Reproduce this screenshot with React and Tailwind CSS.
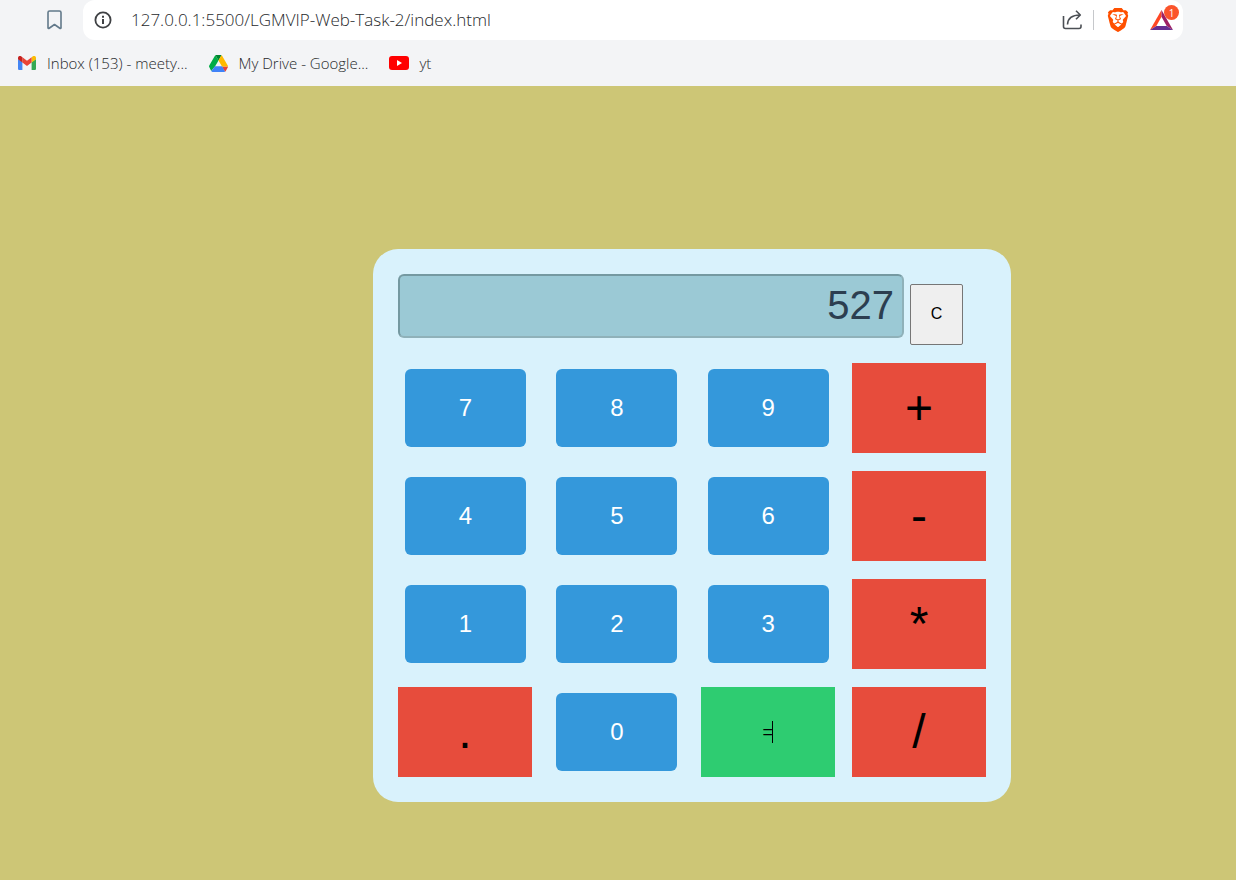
import { useState } from "react";
import { SiBrave } from "react-icons/si";

const keys = [
  { label: "7", kind: "digit" },
  { label: "8", kind: "digit" },
  { label: "9", kind: "digit" },
  { label: "+", kind: "operator" },
  { label: "4", kind: "digit" },
  { label: "5", kind: "digit" },
  { label: "6", kind: "digit" },
  { label: "-", kind: "operator" },
  { label: "1", kind: "digit" },
  { label: "2", kind: "digit" },
  { label: "3", kind: "digit" },
  { label: "*", kind: "operator" },
  { label: ".", kind: "operator" },
  { label: "0", kind: "digit" },
  { label: "=", kind: "equals" },
  { label: "/", kind: "operator" },
];

const keyStyles = {
  digit: "my-[6px] mr-[6px] ml-[7px] rounded-md bg-[#3498db] text-2xl text-white",
  operator: "bg-[#e74c3c] text-5xl text-black",
  equals: "relative bg-[#2ecc71] text-lg text-black",
};

function GmailIcon() {
  return (
    <svg width="18" height="14" viewBox="0 0 18 14" aria-hidden="true">
      <path d="M0 3v9.700C0 13.400.6 14 1.300 14H4.400V6z" fill="#4285f4" />
      <path d="M13.600 6v8h3.100c.7 0 1.300-.6 1.300-1.300V3z" fill="#34a853" />
      <path d="M13.600 1.300v5.200L18 3.300V2c0-1.900-2-2.700-3.400-1.600z" fill="#fbbc04" />
      <path d="M4.400 6.500V1.200L9 4.700l4.600-3.500v5.300L9 10z" fill="#ea4335" />
      <path d="M0 2v1.300l4.400 3.200V1.300L3.400.4C2-.7 0 .1 0 2z" fill="#c5221f" />
    </svg>
  );
}

function DriveIcon() {
  return (
    <svg width="19" height="17" viewBox="0 0 87.3 78" preserveAspectRatio="none" aria-hidden="true">
      <path d="M43.65 25 29.9 1.2c-1.35.8-2.5 1.9-3.3 3.3L1.2 48.5A9.06 9.06 0 0 0 0 53l10 20 17.5-20z" fill="#00ac47" />
      <path d="M73.55 76.8c1.35-.8 2.5-1.9 3.3-3.3l1.6-2.75L86.1 57.5c.8-1.4 1.2-2.95 1.2-4.5H59.8l5.85 11.5z" fill="#ea4335" />
      <path d="M43.65 25 57.4 1.2C56.05.4 54.5 0 52.9 0H34.4c-1.6 0-3.15.45-4.5 1.2z" fill="#00832d" />
      <path d="M61 52H27.5L10.500 73.500c.8 1.400 1.900 2.500 3.250 3.300 1.350.8 2.900 1.2 4.5 1.2h50.8c1.6 0 3.15-.45 4.5-1.2z" fill="#3f82f8" />
      <path d="m73.4 26.5-12.7-22c-.8-1.4-1.95-2.5-3.3-3.3L43.65 25 59.8 53h27.45c0-1.55-.4-3.1-1.2-4.5z" fill="#ffba00" />
    </svg>
  );
}

function YoutubeIcon() {
  return (
    <svg width="20" height="14" viewBox="0 0 20 14" aria-hidden="true">
      <rect width="20" height="14" rx="3" fill="#f00" />
      <path d="M8 4v6l5-3z" fill="#fff" />
    </svg>
  );
}

function BookmarkIcon() {
  return (
    <svg width="15" height="20" viewBox="0 0 15 20" fill="none" stroke="#62798a" strokeWidth="1.6" strokeLinejoin="round" aria-hidden="true">
      <path d="M1 2.6C1 1.7 1.7 1 2.6 1h9.8c.9 0 1.6.7 1.6 1.6V18l-.8.5-5.7-4-5.7 4L1 18z" />
    </svg>
  );
}

function InfoIcon() {
  return (
    <svg width="18" height="18" viewBox="0 0 18 18" fill="none" aria-hidden="true">
      <circle cx="9" cy="9" r="7.6" stroke="#3f4144" strokeWidth="1.8" />
      <path d="M9 8v5M9 4.8v1.9" stroke="#3f4144" strokeWidth="2" />
    </svg>
  );
}

function ShareIcon() {
  return (
    <svg width="21" height="20" viewBox="0 0 21 20" fill="none" stroke="#4b4f54" strokeWidth="1.6" strokeLinejoin="round" aria-hidden="true">
      <path d="M1.500 6v10.500c0 1.200.8 2 2 2h13.500c1.200 0 2-.8 2-2V14.500" />
      <path d="M5.500 14.500C5.800 8.500 9.500 5 18 5M14 .8 18.300 5 14 9.200" />
    </svg>
  );
}

function ShieldIcon() {
  return (
    <span className="relative block">
      <svg width="24" height="24" viewBox="0 0 24 24" aria-hidden="true">
        <path d="M7.500 4h9l2.500 3-1 8.500-6 5-6-5L5 7z" fill="#fff" />
        <SiBrave size={24} color="#ff5000" />
      </svg>
    </span>
  );
}

function RewardsIcon() {
  return (
    <svg width="23" height="20" viewBox="0 0 23 20" aria-hidden="true">
      <path d="M11.500 0 0 20l6.300-4L11.500 6.800z" fill="#ff4724" />
      <path d="M11.500 0 23 20l-6.300-4L11.500 6.800z" fill="#9e1f63" />
      <path d="M0 20h23l-6.300-4H6.300z" fill="#662d91" />
    </svg>
  );
}

function BrowserBar() {
  return (
    <header className="flex h-[86px] flex-col bg-[#f3f4f6] font-['Open_Sans','Noto_Sans',sans-serif] text-[#27292c]">
      <div className="flex h-10 items-center pr-[53px] pl-[47px]">
        <button type="button" aria-label="Bookmark this page" className="mr-[21px] shrink-0">
          <BookmarkIcon />
        </button>
        <div className="flex h-10 min-w-0 flex-1 items-center rounded-xl bg-white pr-1 pl-[11px]">
          <button type="button" aria-label="Site information" className="shrink-0">
            <InfoIcon />
          </button>
          <input
            type="text"
            aria-label="Address"
            defaultValue="127.0.0.1:5500/LGMVIP-Web-Task-2/index.html"
            className="ml-[19px] min-w-0 flex-1 bg-transparent text-[17px] font-light outline-none"
          />
          <button type="button" aria-label="Share" className="shrink-0">
            <ShareIcon />
          </button>
          <span className="mr-3 ml-[10px] h-5 w-px shrink-0 bg-[#c6c8cb]" />
          <button type="button" aria-label="Shields" className="shrink-0">
            <ShieldIcon />
          </button>
          <button type="button" aria-label="Rewards" className="relative mr-[6px] ml-5 shrink-0">
            <RewardsIcon />
            <span className="absolute -top-[5px] -right-[6px] flex size-[15px] items-center justify-center rounded-full bg-[#fb542b] text-[10px] leading-none text-white">
              1
            </span>
          </button>
        </div>
      </div>
      <nav aria-label="Bookmarks" className="flex h-[46px] items-center gap-[21px] pl-[18px] text-[15px] font-light">
        <a href="#inbox" className="flex items-center gap-[11px]">
          <GmailIcon />
          Inbox (153) - meety...
        </a>
        <a href="#drive" className="flex items-center gap-[11px]">
          <DriveIcon />
          My Drive - Google...
        </a>
        <a href="#yt" className="flex items-center gap-[10px]">
          <YoutubeIcon />
          yt
        </a>
      </nav>
    </header>
  );
}

function evaluate(expression) {
  const tokens = expression.match(/\d*\.?\d+|[-+*/]/g) || [];
  const stack = [];
  let operator = "+";
  for (const token of tokens) {
    if (/^[-+*/]$/.test(token)) {
      operator = token;
      continue;
    }
    const value = Number(token);
    if (operator === "+") stack.push(value);
    if (operator === "-") stack.push(-value);
    if (operator === "*") stack.push(stack.pop() * value);
    if (operator === "/") stack.push(stack.pop() / value);
  }
  return String(stack.reduce((sum, value) => sum + value, 0));
}

function Calculator() {
  const [display, setDisplay] = useState("527");

  const press = (label) => {
    setDisplay((current) => (label === "=" ? evaluate(current) : current + label));
  };

  return (
    <section
      aria-label="Calculator"
      className="flex w-full max-w-[638px] flex-col gap-[18px] rounded-[25px] bg-[#d9f2fc] p-[25px] font-['Liberation_Sans',Arial,sans-serif]"
    >
      <div className="flex items-start gap-[6px] pr-[23px]">
        <input
          type="text"
          aria-label="Result"
          value={display}
          onChange={(event) => setDisplay(event.target.value)}
          className="h-16 min-w-0 flex-1 rounded-md border-2 border-t-[#7599a1] border-r-[#8fb1b9] border-b-[#8fb1b9] border-l-[#7599a1] bg-[#9bc9d5] px-2 pb-[2px] text-right text-[40px] text-[#2c3e50] outline-none"
        />
        <button
          type="button"
          onClick={() => setDisplay("")}
          className="mt-[10px] h-[61px] w-[53px] shrink-0 rounded-[2px] border border-[#767676] bg-[#efefef] pb-[2px] text-base text-black"
        >
          C
        </button>
      </div>
      <div className="grid auto-rows-[90px] grid-cols-[repeat(4,134px)] justify-between gap-y-[18px]">
        {keys.map(({ label, kind }) => (
          <button key={label} type="button" onClick={() => press(label)} className={keyStyles[kind]}>
            {label}
            {kind === "equals" && (
              <span className="absolute top-[34px] left-[71px] h-[22px] w-px bg-black" />
            )}
          </button>
        ))}
      </div>
    </section>
  );
}

export default function App() {
  return (
    <div className="flex min-h-screen flex-col">
      <BrowserBar />
      <main className="flex flex-1 items-start justify-center bg-[#cdc676] pt-[163px] pb-[78px] pl-[148px]">
        <Calculator />
      </main>
    </div>
  );
}
